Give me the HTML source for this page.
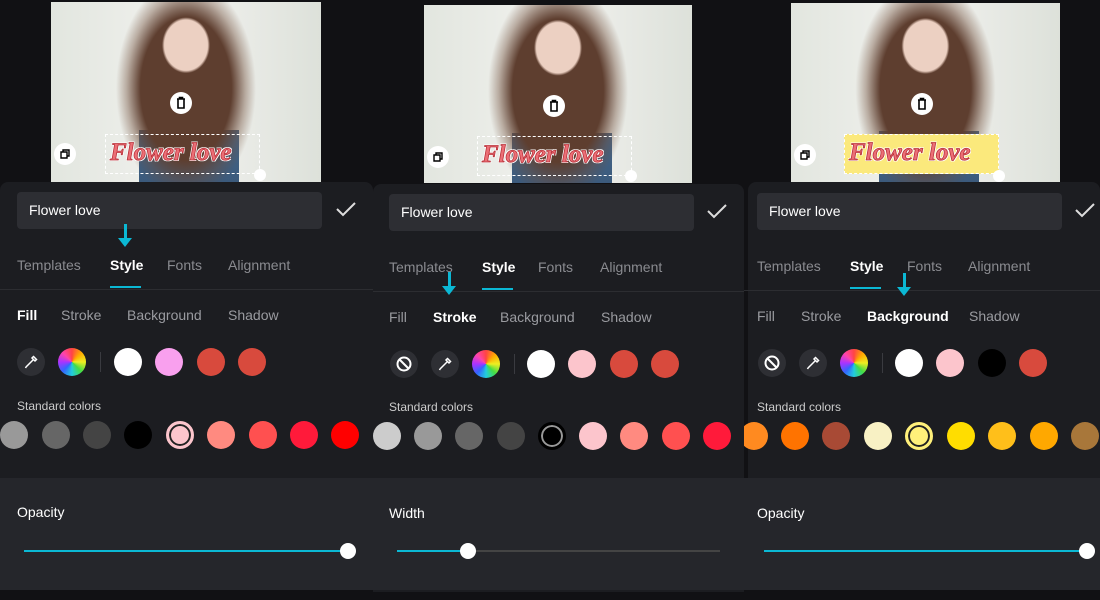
<!DOCTYPE html>
<html><head><meta charset="utf-8"><style>
*{margin:0;padding:0;box-sizing:border-box}
body{width:1100px;height:600px;background:#111114;overflow:hidden;position:relative;font-family:"Liberation Sans",Arial,sans-serif}
.p{position:absolute;top:0;height:600px;overflow:hidden}
.ab{position:absolute}
.bot{position:absolute;left:0;right:0;top:182px;height:408px;background:#1c1d21;border-radius:8px 8px 0 0}
.op{position:absolute;left:0;right:0;top:478px;height:112px;background:#25262b}
.photo{position:absolute;width:270px;height:180px;background:
radial-gradient(ellipse 24px 28px at 50% 24%,#ecd0c2 0 90%,transparent 100%),
radial-gradient(ellipse 70px 110px at 50% 48%,#5e3e2f 0 65%,rgba(110,75,55,.4) 85%,transparent 100%),
linear-gradient(#45678a,#3b5a7c) 88px 128px/100px 52px no-repeat,
linear-gradient(90deg,#e2e6df,#f2f2ef 50%,#dde1da);overflow:hidden}
.circ{position:absolute;border-radius:50%;width:28px;height:28px}
.ic{position:absolute;width:22px;height:22px;border-radius:50%;background:#fff}
.inp{position:absolute;height:37px;background:#2d2e33;border-radius:4px;color:#fff;font-size:14px;line-height:37px;padding-left:12px}
.tab{position:absolute;font-size:14px;color:#8a8b90}
.tab.on{color:#fff;font-weight:bold}
.sub{position:absolute;font-size:14px;color:#9a9ba0}
.sub.on{color:#fff;font-weight:bold}
.lbl{position:absolute;font-size:12px;color:#ccc}
.tool{position:absolute;width:28px;height:28px;border-radius:50%;background:#2e2f34}
.wheel{position:absolute;width:28px;height:28px;border-radius:50%;background:conic-gradient(#f44,#fa0,#ee2,#4d4,#2cd,#36f,#a3f,#f4a,#f44)}
.div{position:absolute;width:1px;height:20px;background:#3a3b40}
.arrow{position:absolute;width:3px;height:20px;background:#0bb8d4}
.arrow:after{content:"";position:absolute;left:-6px;top:14px;border:7px solid transparent;border-top:9px solid #0bb8d4}
.txt{position:absolute;font-family:"Liberation Serif",serif;font-weight:bold;font-style:italic;font-size:25px;color:#ec6f76;-webkit-text-stroke:0.8px #b8323a;text-shadow:1px 1px 0 #fff,-1px -1px 0 #fff,1px -1px 0 #fff,-1px 1px 0 #fff;letter-spacing:0}
.svgi{position:absolute}
</style></head><body>

<!-- Panel 1 -->
<div class="p" style="left:0;width:373px">
 <div class="photo" style="left:51px;top:2px"></div>
 <div class="ab" style="left:105px;top:134px;width:155px;height:40px;border:1px dashed #fff"></div>
 <div class="txt" style="left:110px;top:139px">Flower love</div>
 <div class="ic" style="left:170px;top:92px"></div>
 <svg class="svgi" style="left:174px;top:96px" width="14" height="14" viewBox="0 0 14 14"><path d="M3 3h8M5.5 3V1.5h3V3M4 3v9h6V3" fill="none" stroke="#000" stroke-width="1.6"/></svg>
 <div class="ic" style="left:54px;top:143px"></div>
 <svg class="svgi" style="left:58px;top:147px" width="14" height="14" viewBox="0 0 14 14"><path d="M3 5h6v6H3zM5 5V3h6v6H9" fill="none" stroke="#000" stroke-width="1.4"/></svg>
 <div class="ab" style="left:254px;top:169px;width:12px;height:12px;border-radius:50%;background:#fff"></div>
 <div class="bot"></div><div class="op"></div>
 <div class="inp" style="left:17px;top:192px;width:305px">Flower love</div>
 <svg class="svgi" style="left:335px;top:201px" width="22" height="16" viewBox="0 0 22 16"><path d="M2 8l6 6L20 2" fill="none" stroke="#ddd" stroke-width="2"/></svg>
 <div class="tab" style="left:17px;top:257px">Templates</div>
 <div class="tab on" style="left:110px;top:257px">Style</div>
 <div class="tab" style="left:167px;top:257px">Fonts</div>
 <div class="tab" style="left:228px;top:257px">Alignment</div>
 <div class="ab" style="left:110px;top:286px;width:31px;height:2px;background:#0bb8d4"></div>
 <div class="ab" style="left:0;top:289px;width:373px;height:1px;background:#2c2d31"></div>
 <div class="arrow" style="left:124px;top:224px"></div>
 <div class="sub on" style="left:17px;top:307px">Fill</div>
 <div class="sub" style="left:61px;top:307px">Stroke</div>
 <div class="sub" style="left:127px;top:307px">Background</div>
 <div class="sub" style="left:228px;top:307px">Shadow</div>
 <div class="tool" style="left:17px;top:348px"></div>
 <svg class="svgi" style="left:23px;top:354px" width="16" height="16" viewBox="0 0 16 16"><path d="M3 13l7-7M9 4l3 3M10.5 2.5l3 3-1.5 1.5-3-3zM3 13l-.5 1" fill="none" stroke="#fff" stroke-width="1.5"/></svg>
 <div class="wheel" style="left:58px;top:348px"></div>
 <div class="div" style="left:100px;top:352px"></div>
 <div class="circ" style="left:114px;top:348px;background:#fff"></div>
 <div class="circ" style="left:155px;top:348px;background:#f9a0ee"></div>
 <div class="circ" style="left:197px;top:348px;background:#d84a3d"></div>
 <div class="circ" style="left:238px;top:348px;background:#d84a3d"></div>
 <div class="lbl" style="left:17px;top:399px">Standard colors</div>
 <div class="circ" style="left:0;top:421px;background:#999"></div>
 <div class="circ" style="left:42px;top:421px;background:#666"></div>
 <div class="circ" style="left:83px;top:421px;background:#444"></div>
 <div class="circ" style="left:124px;top:421px;background:#000"></div>
 <div class="circ" style="left:166px;top:421px;background:#fcc5cc;border:3px solid #fcc5cc;box-shadow:inset 0 0 0 2px #222"></div>
 <div class="circ" style="left:207px;top:421px;background:#ff8a80"></div>
 <div class="circ" style="left:249px;top:421px;background:#ff5050"></div>
 <div class="circ" style="left:290px;top:421px;background:#ff1a3a"></div>
 <div class="circ" style="left:331px;top:421px;background:#ff0000"></div>
 <div class="circ" style="left:373px;top:421px;background:#ccc"></div>
 <div class="ab" style="left:17px;top:504px;color:#fff;font-size:14px">Opacity</div>
 <div class="ab" style="left:24px;top:550px;width:324px;height:2px;background:#0bb8d4"></div>
 <div class="ab" style="left:340px;top:543px;width:16px;height:16px;border-radius:50%;background:#fff"></div>
</div>

<!-- Panel 2 -->
<div class="p" style="left:373px;width:371px">
 <div class="photo" style="left:51px;top:5px;width:268px;height:178px"></div>
 <div class="ab" style="left:104px;top:136px;width:155px;height:40px;border:1px dashed #fff"></div>
 <div class="txt" style="left:109px;top:141px">Flower love</div>
 <div class="ic" style="left:170px;top:95px"></div>
 <svg class="svgi" style="left:174px;top:99px" width="14" height="14" viewBox="0 0 14 14"><path d="M3 3h8M5.5 3V1.5h3V3M4 3v9h6V3" fill="none" stroke="#000" stroke-width="1.6"/></svg>
 <div class="ic" style="left:54px;top:146px"></div>
 <svg class="svgi" style="left:58px;top:150px" width="14" height="14" viewBox="0 0 14 14"><path d="M3 5h6v6H3zM5 5V3h6v6H9" fill="none" stroke="#000" stroke-width="1.4"/></svg>
 <div class="ab" style="left:252px;top:170px;width:12px;height:12px;border-radius:50%;background:#fff"></div>
 <div class="bot" style="top:184px"></div><div class="op"></div>
 <div class="inp" style="left:16px;top:194px;width:305px">Flower love</div>
 <svg class="svgi" style="left:333px;top:203px" width="22" height="16" viewBox="0 0 22 16"><path d="M2 8l6 6L20 2" fill="none" stroke="#ddd" stroke-width="2"/></svg>
 <div class="tab" style="left:16px;top:259px">Templates</div>
 <div class="tab on" style="left:109px;top:259px">Style</div>
 <div class="tab" style="left:165px;top:259px">Fonts</div>
 <div class="tab" style="left:227px;top:259px">Alignment</div>
 <div class="ab" style="left:109px;top:288px;width:31px;height:2px;background:#0bb8d4"></div>
 <div class="ab" style="left:0;top:291px;width:371px;height:1px;background:#2c2d31"></div>
 <div class="arrow" style="left:75px;top:272px"></div>
 <div class="sub" style="left:16px;top:309px">Fill</div>
 <div class="sub on" style="left:60px;top:309px">Stroke</div>
 <div class="sub" style="left:127px;top:309px">Background</div>
 <div class="sub" style="left:228px;top:309px">Shadow</div>
 <div class="tool" style="left:17px;top:350px"></div>
 <svg class="svgi" style="left:22px;top:355px" width="18" height="18" viewBox="0 0 18 18"><circle cx="9" cy="9" r="6.5" fill="none" stroke="#fff" stroke-width="2"/><path d="M4.5 4.5l9 9" stroke="#fff" stroke-width="2"/></svg>
 <div class="tool" style="left:58px;top:350px"></div>
 <svg class="svgi" style="left:64px;top:356px" width="16" height="16" viewBox="0 0 16 16"><path d="M3 13l7-7M9 4l3 3M10.5 2.5l3 3-1.5 1.5-3-3zM3 13l-.5 1" fill="none" stroke="#fff" stroke-width="1.5"/></svg>
 <div class="wheel" style="left:99px;top:350px"></div>
 <div class="div" style="left:141px;top:354px"></div>
 <div class="circ" style="left:154px;top:350px;background:#fff"></div>
 <div class="circ" style="left:195px;top:350px;background:#fcc5cc"></div>
 <div class="circ" style="left:237px;top:350px;background:#d84a3d"></div>
 <div class="circ" style="left:278px;top:350px;background:#d84a3d"></div>
 <div class="lbl" style="left:16px;top:400px">Standard colors</div>
 <div class="circ" style="left:0;top:422px;background:#ccc"></div>
 <div class="circ" style="left:41px;top:422px;background:#999"></div>
 <div class="circ" style="left:82px;top:422px;background:#666"></div>
 <div class="circ" style="left:124px;top:422px;background:#444"></div>
 <div class="circ" style="left:165px;top:422px;background:#000;border:3px solid #000;box-shadow:inset 0 0 0 2px #999"></div>
 <div class="circ" style="left:206px;top:422px;background:#fcc5cc"></div>
 <div class="circ" style="left:247px;top:422px;background:#ff8a80"></div>
 <div class="circ" style="left:289px;top:422px;background:#ff5050"></div>
 <div class="circ" style="left:330px;top:422px;background:#ff1a3a"></div>
 <div class="ab" style="left:16px;top:505px;color:#fff;font-size:14px">Width</div>
 <div class="ab" style="left:24px;top:550px;width:323px;height:2px;background:#444"></div>
 <div class="ab" style="left:24px;top:550px;width:71px;height:2px;background:#0bb8d4"></div>
 <div class="ab" style="left:87px;top:543px;width:16px;height:16px;border-radius:50%;background:#fff"></div>
</div>

<!-- Panel 3 -->
<div class="p" style="left:744px;width:356px">
 <div class="photo" style="left:47px;top:3px;width:269px;height:179px"></div>
 <div class="ab" style="left:100px;top:134px;width:155px;height:40px;background:#fbe97c;border:1px dashed #fff"></div>
 <div class="txt" style="left:105px;top:139px">Flower love</div>
 <div class="ic" style="left:167px;top:93px"></div>
 <svg class="svgi" style="left:171px;top:97px" width="14" height="14" viewBox="0 0 14 14"><path d="M3 3h8M5.5 3V1.5h3V3M4 3v9h6V3" fill="none" stroke="#000" stroke-width="1.6"/></svg>
 <div class="ic" style="left:50px;top:144px"></div>
 <svg class="svgi" style="left:54px;top:148px" width="14" height="14" viewBox="0 0 14 14"><path d="M3 5h6v6H3zM5 5V3h6v6H9" fill="none" stroke="#000" stroke-width="1.4"/></svg>
 <div class="ab" style="left:249px;top:170px;width:12px;height:12px;border-radius:50%;background:#fff"></div>
 <div class="bot" style="left:4px"></div><div class="op"></div>
 <div class="inp" style="left:13px;top:193px;width:305px">Flower love</div>
 <svg class="svgi" style="left:330px;top:202px" width="22" height="16" viewBox="0 0 22 16"><path d="M2 8l6 6L20 2" fill="none" stroke="#ddd" stroke-width="2"/></svg>
 <div class="tab" style="left:13px;top:258px">Templates</div>
 <div class="tab on" style="left:106px;top:258px">Style</div>
 <div class="tab" style="left:163px;top:258px">Fonts</div>
 <div class="tab" style="left:224px;top:258px">Alignment</div>
 <div class="ab" style="left:106px;top:287px;width:31px;height:2px;background:#0bb8d4"></div>
 <div class="ab" style="left:0;top:290px;width:356px;height:1px;background:#2c2d31"></div>
 <div class="arrow" style="left:159px;top:273px"></div>
 <div class="sub" style="left:13px;top:308px">Fill</div>
 <div class="sub" style="left:57px;top:308px">Stroke</div>
 <div class="sub on" style="left:123px;top:308px">Background</div>
 <div class="sub" style="left:225px;top:308px">Shadow</div>
 <div class="tool" style="left:14px;top:349px"></div>
 <svg class="svgi" style="left:19px;top:354px" width="18" height="18" viewBox="0 0 18 18"><circle cx="9" cy="9" r="6.5" fill="none" stroke="#fff" stroke-width="2"/><path d="M4.5 4.5l9 9" stroke="#fff" stroke-width="2"/></svg>
 <div class="tool" style="left:55px;top:349px"></div>
 <svg class="svgi" style="left:61px;top:355px" width="16" height="16" viewBox="0 0 16 16"><path d="M3 13l7-7M9 4l3 3M10.5 2.5l3 3-1.5 1.5-3-3zM3 13l-.5 1" fill="none" stroke="#fff" stroke-width="1.5"/></svg>
 <div class="wheel" style="left:96px;top:349px"></div>
 <div class="div" style="left:138px;top:353px"></div>
 <div class="circ" style="left:151px;top:349px;background:#fff"></div>
 <div class="circ" style="left:192px;top:349px;background:#fcc5cc"></div>
 <div class="circ" style="left:234px;top:349px;background:#000"></div>
 <div class="circ" style="left:275px;top:349px;background:#d84a3d"></div>
 <div class="lbl" style="left:13px;top:400px">Standard colors</div>
 <div class="circ" style="left:-4px;top:422px;background:#ff8a20"></div>
 <div class="circ" style="left:37px;top:422px;background:#ff7300"></div>
 <div class="circ" style="left:78px;top:422px;background:#a84a35"></div>
 <div class="circ" style="left:120px;top:422px;background:#f8f1c4"></div>
 <div class="circ" style="left:161px;top:422px;background:#fff07a;border:3px solid #fff07a;box-shadow:inset 0 0 0 2px #222"></div>
 <div class="circ" style="left:203px;top:422px;background:#ffdd00"></div>
 <div class="circ" style="left:244px;top:422px;background:#ffbf1a"></div>
 <div class="circ" style="left:286px;top:422px;background:#ffa800"></div>
 <div class="circ" style="left:327px;top:422px;background:#a8773a"></div>
 <div class="ab" style="left:13px;top:505px;color:#fff;font-size:14px">Opacity</div>
 <div class="ab" style="left:20px;top:550px;width:323px;height:2px;background:#0bb8d4"></div>
 <div class="ab" style="left:335px;top:543px;width:16px;height:16px;border-radius:50%;background:#fff"></div>
</div>
</body></html>
